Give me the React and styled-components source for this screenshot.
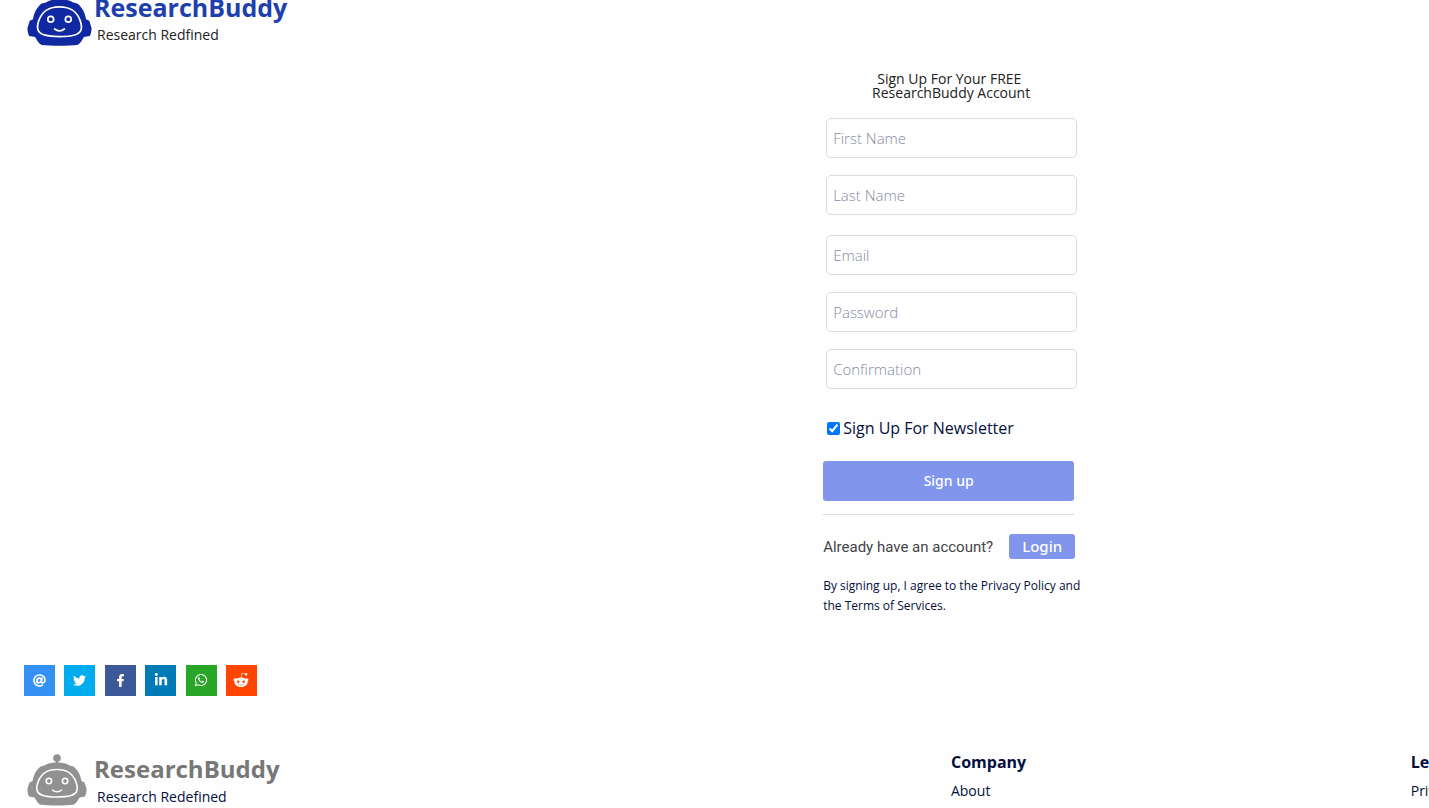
import React, { useState } from 'react';
import styled, { createGlobalStyle } from 'styled-components';
import { FaAt, FaTwitter, FaFacebookF, FaLinkedinIn, FaWhatsapp, FaRedditAlien } from 'react-icons/fa';

const GlobalStyle = createGlobalStyle`
  * {
    box-sizing: border-box;
  }
  body {
    margin: 0;
    background: #fefefe;
    color: #03103c;
    font-family: "Open Sans", "Noto Sans", sans-serif;
    overflow: hidden;
  }
`;

const Page = styled.div`
  min-height: 100vh;
  overflow: hidden;
`;

const Header = styled.header`
  margin-top: -10px;
  padding: 0 27px;
`;

const Brand = styled.a`
  display: flex;
  align-items: center;
  gap: ${(props) => (props.$muted ? '7px' : '2px')};
  width: max-content;
  color: ${(props) => (props.$muted ? '#03103c' : '#222')};
  text-decoration: none;
`;

const BrandText = styled.span`
  display: flex;
  flex-direction: column;
`;

const BrandName = styled.strong`
  font-size: ${(props) => (props.$muted ? '24px' : '25px')};
  line-height: 34px;
  font-weight: 700;
  color: ${(props) => (props.$muted ? '#777' : '#1f3fae')};
`;

const Tagline = styled.span`
  padding-left: 3px;
  font-size: 14px;
  line-height: 22px;
`;

const Main = styled.main`
  margin-left: calc(100% / 3);
  padding-top: 26px;
  display: flex;
  justify-content: center;
`;

const Form = styled.form`
  width: 259px;
`;

const FormTitle = styled.h1`
  margin: 0 0 18px;
  width: 256px;
  font-size: 14px;
  line-height: 14px;
  font-weight: 400;
  color: #222;
  text-align: center;
`;

const Fields = styled.div`
  display: flex;
  flex-direction: column;
  gap: 17px;
  margin-bottom: ${(props) => (props.$last ? '28px' : '20px')};
  padding-left: 3px;
`;

const Input = styled.input`
  width: 251px;
  height: 40px;
  padding: 0 6px;
  border: 1px solid #d9dae4;
  border-radius: 5px;
  background: #fff;
  font-family: inherit;
  font-size: 15px;
  font-weight: 300;
  color: #222;

  &::placeholder {
    color: #858aa3;
    opacity: 1;
  }
`;

const CheckLabel = styled.label`
  display: flex;
  align-items: center;
  gap: 3px;
  padding-left: 4px;
  font-size: 16px;
  line-height: 22px;
`;

const Checkbox = styled.input`
  width: 13px;
  height: 13px;
  margin: 0;
  accent-color: #0075ff;
`;

const Button = styled.button`
  width: ${(props) => (props.$small ? '66px' : '251px')};
  height: ${(props) => (props.$small ? '25px' : '40px')};
  padding: 0 0 1px;
  border: none;
  border-radius: 3px;
  background: #8095eb;
  color: #fff;
  font-family: "Noto Sans", "Open Sans", sans-serif;
  font-size: ${(props) => (props.$small ? '15px' : '14px')};
  font-weight: 500;
  cursor: pointer;
`;

const Submit = styled.div`
  width: 251px;
  margin-top: 22px;
  padding-bottom: 13px;
  border-bottom: 1px solid #dcdcdf;
`;

const LoginRow = styled.div`
  display: flex;
  align-items: center;
  justify-content: space-between;
  width: 252px;
  margin-top: 19px;
  font-family: Roboto, sans-serif;
  font-size: 15px;
  line-height: 18px;
  color: #444;
`;

const Terms = styled.p`
  margin: 17px 0 0;
  font-size: 12px;
  line-height: 20px;
`;

const Share = styled.div`
  display: flex;
  justify-content: space-between;
  width: 233px;
  margin: 49px 0 0 24px;
`;

const ShareLink = styled.a`
  display: flex;
  align-items: center;
  justify-content: center;
  width: 31px;
  height: 31px;
  padding-bottom: 1px;
  background: ${(props) => props.$color};
  color: #fff;
  font-size: 14px;
`;

// the last column runs past the right edge of the window
const Footer = styled.footer`
  display: grid;
  grid-template-columns: 66% 32.7% 32.7%;
  padding: 56px 0 0 23px;
`;

const FooterBrand = styled.div`
  padding-left: 4px;
`;

const FooterColumn = styled.nav`
  display: flex;
  flex-direction: column;
  gap: 9px;
`;

const FooterTitle = styled.h2`
  margin: 0;
  font-size: 16px;
  line-height: 20px;
  font-weight: 700;
`;

const FooterLink = styled.a`
  font-size: 14px;
  line-height: 20px;
  color: inherit;
  text-decoration: none;
  white-space: nowrap;
`;

const Robot = ({ width, color }) => (
  <svg width={width} viewBox="0 0 60 52" fill="none" aria-hidden="true">
    <circle cx="30" cy="4" r="3.8" fill={color} />
    <path d="M30 5V12" stroke={color} strokeWidth="2.4" />
    <path
      d="M30 8.500C36 8.500 40 9.800 42.500 11.500L46.500 12.500C51 16 53.500 21 54.500 27L57.500 28.500L59.600 35C59.600 38 59 40 58 42.500L52.500 43.500C50.500 46.500 49.500 49.500 46.500 50.800C38 51.700 22 51.700 13.500 50.800C10.500 49.500 9.500 46.500 7.500 43.500L2 42.500C1 40 .4 38 .4 35L2.500 28.500L5.500 27C6.500 21 9 16 13.500 12.500L17.500 11.500C20 9.800 24 8.500 30 8.500Z"
      fill={color}
    />
    <path
      d="M30 15.500C41 15.500 46 20 49 28C51.500 35 50.500 39.500 44 41.500C37 43.500 23 43.500 16 41.500C9.500 39.500 8.500 35 11 28C14 20 19 15.500 30 15.500Z"
      stroke="#fff"
      strokeWidth="1.6"
    />
    <circle cx="21.900" cy="27" r="2.700" stroke="#fff" strokeWidth="1.600" />
    <circle cx="38.100" cy="27" r="2.700" stroke="#fff" strokeWidth="1.600" />
    <path d="M25.500 36C28 38.300 32 38.300 34.500 36" stroke="#fff" strokeWidth="1.600" strokeLinecap="round" />
  </svg>
);

const nameFields = [
  { name: 'firstName', label: 'First Name', type: 'text' },
  { name: 'lastName', label: 'Last Name', type: 'text' },
];

const accountFields = [
  { name: 'email', label: 'Email', type: 'email' },
  { name: 'password', label: 'Password', type: 'password' },
  { name: 'confirmation', label: 'Confirmation', type: 'password' },
];

const networks = [
  { name: 'Email', color: '#3490f3', Icon: FaAt, size: 13 },
  { name: 'Twitter', color: '#00acee', Icon: FaTwitter, size: 13 },
  { name: 'Facebook', color: '#3b5998', Icon: FaFacebookF, size: 13 },
  { name: 'LinkedIn', color: '#007bb6', Icon: FaLinkedinIn, size: 14 },
  { name: 'WhatsApp', color: '#29a628', Icon: FaWhatsapp, size: 14 },
  { name: 'Reddit', color: '#ff4500', Icon: FaRedditAlien, size: 16 },
];

const App = () => {
  const [newsletter, setNewsletter] = useState(true);

  return (
    <Page>
      <GlobalStyle />
      <Header>
        <Brand href="#">
          <Robot width={65} color="#1029a3" />
          <BrandText>
            <BrandName>ResearchBuddy</BrandName>
            <Tagline>Research Redfined</Tagline>
          </BrandText>
        </Brand>
      </Header>

      <Main>
        <Form onSubmit={(e) => e.preventDefault()}>
          <FormTitle>
            Sign Up For Your FREE&nbsp;
            <br />
            ResearchBuddy Account
          </FormTitle>
          <Fields>
            {nameFields.map((f) => (
              <Input key={f.name} name={f.name} type={f.type} placeholder={f.label} aria-label={f.label} />
            ))}
          </Fields>
          <Fields $last>
            {accountFields.map((f) => (
              <Input key={f.name} name={f.name} type={f.type} placeholder={f.label} aria-label={f.label} />
            ))}
          </Fields>
          <CheckLabel>
            <Checkbox type="checkbox" checked={newsletter} onChange={() => setNewsletter(!newsletter)} />
            Sign Up For Newsletter
          </CheckLabel>
          <Submit>
            <Button type="submit">Sign up</Button>
          </Submit>
          <LoginRow>
            <span>Already have an account?</span>
            <Button type="button" $small>Login</Button>
          </LoginRow>
          <Terms>By signing up, I agree to the Privacy Policy and the Terms of Services.</Terms>
        </Form>
      </Main>

      <Share>
        {networks.map(({ name, color, Icon, size }) => (
          <ShareLink key={name} href="#" aria-label={name} $color={color}>
            <Icon size={size} />
          </ShareLink>
        ))}
      </Share>

      <Footer>
        <FooterBrand>
          <Brand href="#" $muted>
            <Robot width={60} color="#919191" />
            <BrandText>
              <BrandName $muted>ResearchBuddy</BrandName>
              <Tagline>Research Redefined</Tagline>
            </BrandText>
          </Brand>
        </FooterBrand>
        <FooterColumn>
          <FooterTitle>Company</FooterTitle>
          <FooterLink href="#">About</FooterLink>
        </FooterColumn>
        <FooterColumn>
          <FooterTitle>Legal</FooterTitle>
          <FooterLink href="#">Privacy</FooterLink>
        </FooterColumn>
      </Footer>
    </Page>
  );
};

export default App;
